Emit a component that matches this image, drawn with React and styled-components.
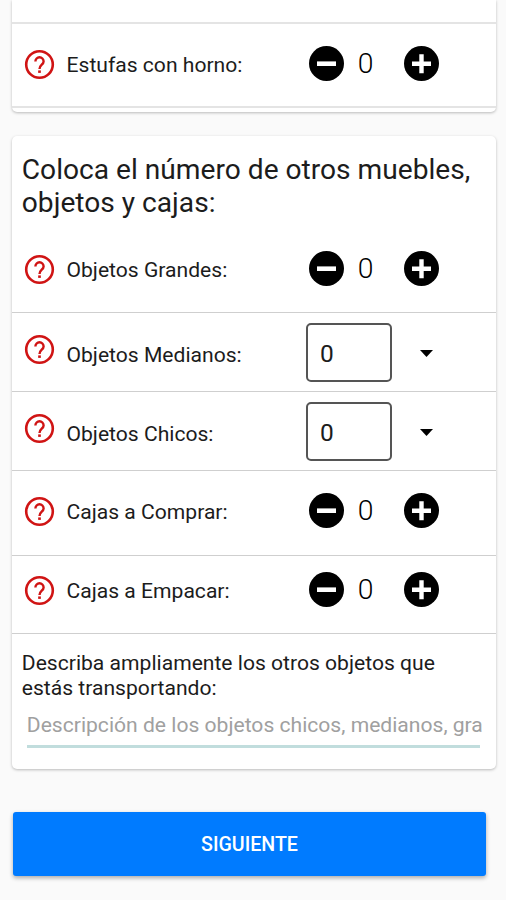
import React from 'react';
import styled, { createGlobalStyle } from 'styled-components';

const GlobalStyle = createGlobalStyle`
  * {
    box-sizing: border-box;
  }

  body {
    margin: 0;
    background-color: #fafafa;
    color: #1c1c1c;
    font-family: Roboto, sans-serif;
  }
`;

const Screen = styled.main`
  display: flex;
  flex-direction: column;
  height: 900px;
  padding: 0 10px 0 12px;
  overflow: hidden;
`;

const Card = styled.section`
  flex: none;
  background-color: #fff;
  border-radius: ${props => (props.$continued ? '0 0 5px 5px' : '5px')};
  box-shadow: 0 1px 3px rgba(0, 0, 0, 0.26);
  margin-bottom: ${props => props.$gap}px;
  padding-bottom: ${props => (props.$continued ? 4 : 21)}px;
`;

const PreviousRow = styled.div`
  height: 24px;
  border-bottom: 2px solid #e4e4e4;
`;

const Title = styled.h1`
  margin: 0;
  padding: 17px 0 0 9.8px;
  font-size: 28.15px;
  line-height: 33.3px;
  font-weight: 400;
`;

const Row = styled.div`
  display: flex;
  align-items: flex-start;
  height: ${props => props.$height}px;
  padding: ${props => props.$top}px 0 0 9.5px;
  border-bottom: ${props => (props.$thick ? '2px solid #e4e4e4' : '1px solid #cfcfcf')};
`;

const HelpIcon = styled.svg`
  flex: none;
  margin-right: 10px;
`;

const Label = styled.span`
  flex: none;
  width: 242.5px;
  margin-top: ${props => props.$offset}px;
  font-size: 21.1px;
  line-height: 25px;
`;

const Stepper = styled.div`
  display: flex;
  align-items: center;
  margin-top: ${props => props.$offset}px;
`;

const RoundButton = styled.button`
  display: block;
  width: 35px;
  height: 35px;
  padding: 0;
  border: 0;
  background: none;

  svg {
    display: block;
  }
`;

const Count = styled.span`
  width: 43px;
  margin-right: 16.5px;
  font-size: 28.3px;
  line-height: 33px;
  font-weight: 300;
  color: #000;
  text-align: center;
`;

const Picker = styled.div`
  display: flex;
  align-items: center;
  margin: -9px 0 0 -3px;
`;

const PickerInput = styled.input`
  width: 86px;
  height: 59px;
  padding: 3px 0 0 12px;
  border: 2px solid #555;
  border-radius: 5px;
  background: #fff;
  color: #1c1c1c;
  font-family: inherit;
  font-size: 24.5px;
  outline: none;
`;

const Caret = styled.svg`
  margin: 2px 0 0 28px;
`;

const Description = styled.div`
  padding: 17px 0 0 9.8px;
`;

const DescriptionLabel = styled.label`
  display: block;
  width: 430px;
  font-size: 21.1px;
  line-height: 24.8px;
`;

const DescriptionInput = styled.input`
  display: block;
  width: 457px;
  height: 36px;
  margin: 8px 0 0 5px;
  padding: 0 0 4px;
  border: 0;
  background: none;
  font-family: inherit;
  font-size: 21.1px;
  outline: none;

  &::placeholder {
    color: #a0a0a0;
    opacity: 1;
  }
`;

const Underline = styled.div`
  width: 453px;
  height: 3px;
  margin-left: 5.2px;
  background-color: #c1dddd;
`;

const NextButton = styled.button`
  flex: none;
  width: 473px;
  height: 64px;
  margin-left: 1px;
  padding: 2px 0 0;
  border: 0;
  border-radius: 3px;
  background-color: #007bff;
  box-shadow: 0 2px 4px rgba(0, 0, 0, 0.32);
  color: #fff;
  font-family: inherit;
  font-size: 19.6px;
  font-weight: 500;
`;

const Help = () => (
  <HelpIcon width="35" height="35" viewBox="0 0 35 35" fill="none" stroke="#d01414">
    <circle cx="17.5" cy="17.5" r="13.3" strokeWidth="2.6" />
    <path
      d="M13.4 14.4a4.1 4.1 0 1 1 8.2 0c0 3.1-4.1 3.5-4.1 7.5"
      strokeWidth="2.4"
    />
    <path d="M17.5 23.4v2.5" strokeWidth="2.7" />
  </HelpIcon>
);

const CounterRow = ({ label, top, height, thick, labelOffset = 5, stepperOffset = -1 }) => {
  const [count, setCount] = React.useState(0);

  return (
    <Row $top={top} $height={height} $thick={thick}>
      <Help />
      <Label $offset={labelOffset}>{label}</Label>
      <Stepper $offset={stepperOffset}>
        <RoundButton aria-label="Quitar" onClick={() => setCount(Math.max(0, count - 1))}>
          <svg width="35" height="35" viewBox="0 0 35 35">
            <circle cx="17.5" cy="17.5" r="17.5" fill="#000" />
            <path d="M8 17.7h19" stroke="#fff" strokeWidth="4.6" />
          </svg>
        </RoundButton>
        <Count>{count}</Count>
        <RoundButton aria-label="Agregar" onClick={() => setCount(count + 1)}>
          <svg width="35" height="35" viewBox="0 0 35 35">
            <circle cx="17.5" cy="17.5" r="17.5" fill="#000" />
            <path d="M8 17.7h19M17.5 8.2v19" stroke="#fff" strokeWidth="4.4" />
          </svg>
        </RoundButton>
      </Stepper>
    </Row>
  );
};

const PickerRow = ({ label, top, height }) => (
  <Row $top={top} $height={height}>
    <Help />
    <Label $offset={10}>{label}</Label>
    <Picker>
      <PickerInput defaultValue="0" />
      <Caret width="13" height="7" viewBox="0 0 13 7">
        <path d="M0 0h13L6.5 7z" fill="#000" />
      </Caret>
    </Picker>
  </Row>
);

const App = () => (
  <Screen>
    <GlobalStyle />
    <Card $continued $gap={24}>
      <PreviousRow />
      <CounterRow label="Estufas con horno:" top={22.6} height={84} thick />
    </Card>

    <Card $gap={43}>
      <Title>Coloca el número de otros muebles, objetos y cajas:</Title>
      <CounterRow label="Objetos Grandes:" top={32} height={93.4} />
      <PickerRow label="Objetos Medianos:" top={18.8} height={79} />
      <PickerRow label="Objetos Chicos:" top={18.8} height={79} />
      <CounterRow label="Cajas a Comprar:" top={23} height={85} stepperOffset={-0.5} />
      <CounterRow label="Cajas a Empacar:" top={17} height={78} stepperOffset={-0.5} />
      <Description>
        <DescriptionLabel htmlFor="descripcion">
          Describa ampliamente los otros objetos que estás transportando:
        </DescriptionLabel>
        <DescriptionInput
          id="descripcion"
          placeholder="Descripción de los objetos chicos, medianos, gra"
        />
        <Underline />
      </Description>
    </Card>

    <NextButton>SIGUIENTE</NextButton>
  </Screen>
);

export default App;
